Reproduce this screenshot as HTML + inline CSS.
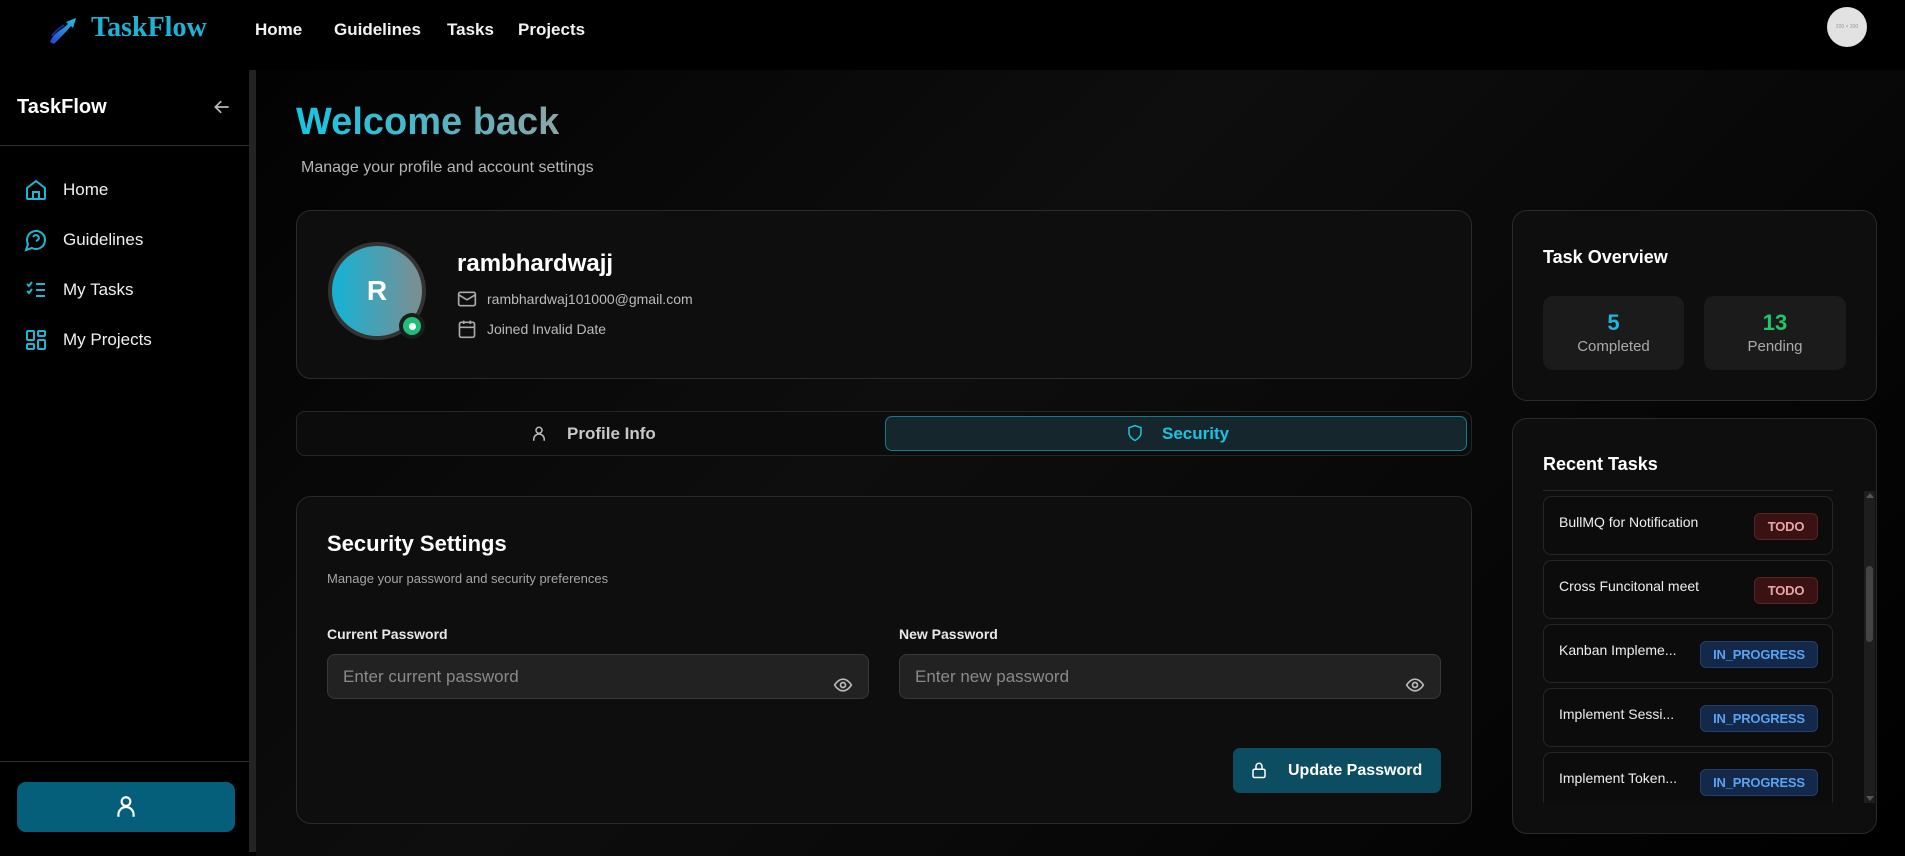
<!DOCTYPE html>
<html><head><meta charset="utf-8">
<style>
*{box-sizing:border-box;margin:0;padding:0}
body{width:1905px;height:856px;overflow:hidden;background:#000;font-family:"Liberation Sans",sans-serif;color:#fff;position:relative}
.abs{position:absolute}
.nav a{position:absolute;top:20px;font-size:17px;font-weight:600;color:#f2f2f2}
.card{position:absolute;background:#0e0e0e;border:1px solid #2a2a2a;border-radius:15px}
.menu{position:absolute;left:24px;font-size:17px;color:#f0f0f0;display:flex;align-items:center}
.menu svg{margin-right:15px}
.item{position:absolute;left:1543px;width:290px;height:59px;border:1px solid #262626;border-radius:8px;background:#0c0c0c}
.item span.t{position:absolute;left:15px;top:17px;font-size:14px;color:#eee}
.badge{position:absolute;right:14px;top:16px;height:27px;border-radius:6px;font-size:13px;font-weight:700;line-height:25px;text-align:center;letter-spacing:-0.2px}
.todo{width:64px;background:#3a1214;border:1px solid #5a2224;color:#e9a4a4}
.ip{width:118px;background:#14284a;border:1px solid #223e6a;color:#5aa2f0}
.inp{position:absolute;top:654px;width:542px;height:45px;background:#222;border:1px solid #383838;border-radius:8px;font-size:17px;color:#8a8a8a;padding:12px 15px}
</style></head><body>
<div class="abs" style="left:256px;top:70px;width:1649px;height:786px;background:linear-gradient(135deg,#020202 0%,#0e0e0e 40%,#070707 70%,#000 100%)"></div>

<svg class="abs" style="left:48px;top:16px" width="32" height="30" viewBox="0 0 32 30">
<defs><linearGradient id="lg" x1="0" y1="1" x2="1" y2="0"><stop offset="0" stop-color="#2a3fd0"/><stop offset="1" stop-color="#1ec8e0"/></linearGradient></defs>
<path d="M2 26 C6 16 14 14 20 8 L18 6 L28 2 L25 12 L23 10 C18 16 12 22 6 28 Z" fill="url(#lg)"/>
<path d="M4 20 C8 14 12 12 16 9" stroke="#1a2a90" stroke-width="2" fill="none"/>
</svg>
<div class="abs" style="left:91px;top:12px;font-family:'Liberation Serif',serif;font-weight:700;font-size:28px;color:#1cb4d6">TaskFlow</div>
<div class="nav">
<a style="left:255px">Home</a><a style="left:334px">Guidelines</a><a style="left:447px">Tasks</a><a style="left:518px">Projects</a>
</div>
<div class="abs" style="left:1827px;top:7px;width:40px;height:40px;border-radius:50%;background:#e2e2e2;font-size:5px;color:#999;text-align:center;line-height:40px">200 × 200</div>

<div class="abs" style="left:249px;top:70px;width:7px;height:782px;background:#232323"></div>
<div class="abs" style="left:17px;top:96px;font-size:20px;font-weight:700">TaskFlow</div>
<svg class="abs" style="left:212px;top:97px" width="20" height="20" viewBox="0 0 24 24" fill="none" stroke="#bbb" stroke-width="2"><path d="M20 12H5M11 5l-7 7 7 7"/></svg>
<div class="abs" style="left:0;top:145px;width:249px;height:1px;background:#2e2e2e"></div>
<div class="menu" style="top:178px"><svg width="24" height="24" viewBox="0 0 24 24" fill="none" stroke="#1fb6d4" stroke-width="2"><path d="M3 10l9-7 9 7v10a1 1 0 01-1 1H4a1 1 0 01-1-1z"/><path d="M9 21v-7h6v7"/></svg>Home</div>
<div class="menu" style="top:228px"><svg width="24" height="24" viewBox="0 0 24 24" fill="none" stroke="#1fb6d4" stroke-width="2"><path d="M7.9 20A9 9 0 1 0 4 16.1L2 22z"/><path d="M9.1 9a3 3 0 0 1 5.8 1c0 2-3 3-3 3"/><path d="M12 17h.01"/></svg>Guidelines</div>
<div class="menu" style="top:278px"><svg width="24" height="24" viewBox="0 0 24 24" fill="none" stroke="#1fb6d4" stroke-width="2"><path d="M3 6l2 2 3-4M3 13l2 2 3-4M12 6h9M12 12h9M12 18h9M4 19h.01"/></svg>My Tasks</div>
<div class="menu" style="top:328px"><svg width="24" height="24" viewBox="0 0 24 24" fill="none" stroke="#1fb6d4" stroke-width="2"><rect x="3" y="3" width="7" height="9" rx="1"/><rect x="14" y="3" width="7" height="5" rx="1"/><rect x="14" y="12" width="7" height="9" rx="1"/><rect x="3" y="16" width="7" height="5" rx="1"/></svg>My Projects</div>
<div class="abs" style="left:0;top:761px;width:249px;height:1px;background:#2e2e2e"></div>
<div class="abs" style="left:17px;top:782px;width:218px;height:50px;background:#065f7a;border-radius:9px"></div>
<svg class="abs" style="left:113px;top:794px" width="26" height="26" viewBox="0 0 24 24" fill="none" stroke="#fff" stroke-width="2"><circle cx="12" cy="7" r="4"/><path d="M5 21v-2a7 7 0 0 1 14 0v2"/></svg>

<div class="abs" style="left:296px;top:101px;font-size:38px;font-weight:700;background:linear-gradient(90deg,#14c6e4,#8aa5a8);-webkit-background-clip:text;color:transparent">Welcome back</div>
<div class="abs" style="left:301px;top:159px;font-size:16px;color:#b5b5b5">Manage your profile and account settings</div>

<div class="card" style="left:296px;top:210px;width:1176px;height:169px"></div>
<div class="abs" style="left:328px;top:242px;width:98px;height:98px;border-radius:50%;border:4px solid #333;background:linear-gradient(90deg,#13b3d6,#7e8d90);font-size:28px;font-weight:700;text-align:center;line-height:90px">R</div>
<div class="abs" style="left:399px;top:313px;width:26px;height:26px;border-radius:50%;background:#1c1c1c"></div>
<div class="abs" style="left:403px;top:317px;width:18px;height:18px;border-radius:50%;background:#1fbf7a"></div>
<div class="abs" style="left:409px;top:323px;width:7px;height:7px;border-radius:50%;background:#fff"></div>
<div class="abs" style="left:457px;top:250px;font-size:24px;font-weight:700">rambhardwajj</div>
<svg class="abs" style="left:457px;top:289px" width="20" height="20" viewBox="0 0 24 24" fill="none" stroke="#aaa" stroke-width="2"><rect x="2" y="4" width="20" height="16" rx="2"/><path d="M2 7l10 6 10-6"/></svg>
<div class="abs" style="left:487px;top:291px;font-size:14px;color:#bbb">rambhardwaj101000@gmail.com</div>
<svg class="abs" style="left:457px;top:319px" width="20" height="20" viewBox="0 0 24 24" fill="none" stroke="#aaa" stroke-width="2"><rect x="3" y="4" width="18" height="18" rx="2"/><path d="M16 2v4M8 2v4M3 10h18"/></svg>
<div class="abs" style="left:487px;top:321px;font-size:14px;color:#bbb">Joined Invalid Date</div>

<div class="abs" style="left:296px;top:411px;width:1176px;height:45px;background:#0c0c0c;border:1px solid #262626;border-radius:9px"></div>
<div class="abs" style="left:885px;top:416px;width:582px;height:35px;background:#15272c;border:1px solid #157a8e;border-radius:7px"></div>
<svg class="abs" style="left:530px;top:424px" width="18" height="20" viewBox="0 0 24 24" fill="none" stroke="#bbb" stroke-width="2"><circle cx="12" cy="7" r="4"/><path d="M5 21v-2a7 7 0 0 1 14 0v2"/></svg>
<div class="abs" style="left:567px;top:424px;font-size:17px;font-weight:600;color:#c8c8c8">Profile Info</div>
<svg class="abs" style="left:1126px;top:423px" width="18" height="20" viewBox="0 0 24 24" fill="none" stroke="#1cc3e0" stroke-width="2"><path d="M12 22s8-4 8-10V5l-8-3-8 3v7c0 6 8 10 8 10z"/></svg>
<div class="abs" style="left:1162px;top:424px;font-size:17px;font-weight:600;color:#1cc3e0">Security</div>

<div class="card" style="left:296px;top:496px;width:1176px;height:328px"></div>
<div class="abs" style="left:327px;top:531px;font-size:22px;font-weight:700">Security Settings</div>
<div class="abs" style="left:327px;top:571px;font-size:13px;color:#a5a5a5">Manage your password and security preferences</div>
<div class="abs" style="left:327px;top:626px;font-size:14px;font-weight:700;color:#e8e8e8">Current Password</div>
<div class="abs" style="left:899px;top:626px;font-size:14px;font-weight:700;color:#e8e8e8">New Password</div>
<div class="inp" style="left:327px">Enter current password</div>
<div class="inp" style="left:899px">Enter new password</div>
<svg class="abs" style="left:833px;top:675px" width="20" height="20" viewBox="0 0 24 24" fill="none" stroke="#bbb" stroke-width="2"><path d="M2 12s4-7 10-7 10 7 10 7-4 7-10 7S2 12 2 12z"/><circle cx="12" cy="12" r="3"/></svg>
<svg class="abs" style="left:1405px;top:675px" width="20" height="20" viewBox="0 0 24 24" fill="none" stroke="#bbb" stroke-width="2"><path d="M2 12s4-7 10-7 10 7 10 7-4 7-10 7S2 12 2 12z"/><circle cx="12" cy="12" r="3"/></svg>
<div class="abs" style="left:1233px;top:748px;width:208px;height:45px;background:#0d4d62;border-radius:7px"></div>
<svg class="abs" style="left:1250px;top:760px" width="18" height="20" viewBox="0 0 24 24" fill="none" stroke="#fff" stroke-width="2"><rect x="4" y="11" width="16" height="11" rx="2"/><path d="M8 11V7a4 4 0 0 1 8 0v4"/></svg>
<div class="abs" style="left:1288px;top:762px;font-size:16px;font-weight:700">Update Password</div>

<div class="card" style="left:1512px;top:210px;width:365px;height:191px"></div>
<div class="abs" style="left:1543px;top:247px;font-size:18px;font-weight:700">Task Overview</div>
<div class="abs" style="left:1543px;top:296px;width:141px;height:74px;background:#1b1b1b;border-radius:10px;text-align:center">
<div style="font-size:22px;font-weight:700;color:#1cb8dc;margin-top:14px">5</div><div style="font-size:15px;color:#aaa;margin-top:2px">Completed</div></div>
<div class="abs" style="left:1704px;top:296px;width:142px;height:74px;background:#1b1b1b;border-radius:10px;text-align:center">
<div style="font-size:22px;font-weight:700;color:#1fc66a;margin-top:14px">13</div><div style="font-size:15px;color:#aaa;margin-top:2px">Pending</div></div>

<div class="card" style="left:1512px;top:418px;width:365px;height:416px"></div>
<div class="abs" style="left:1543px;top:454px;font-size:18px;font-weight:700">Recent Tasks</div>
<div class="abs" style="left:1543px;top:490px;width:290px;height:1px;background:#262626"></div>
<div style="position:absolute;left:0;top:491px;width:1905px;height:312px;overflow:hidden">
<div class="item" style="top:5px"><span class="t">BullMQ for Notification</span><span class="badge todo">TODO</span></div>
<div class="item" style="top:69px"><span class="t">Cross Funcitonal meet</span><span class="badge todo">TODO</span></div>
<div class="item" style="top:133px"><span class="t">Kanban Impleme...</span><span class="badge ip">IN_PROGRESS</span></div>
<div class="item" style="top:197px"><span class="t">Implement Sessi...</span><span class="badge ip">IN_PROGRESS</span></div>
<div class="item" style="top:261px"><span class="t">Implement Token...</span><span class="badge ip">IN_PROGRESS</span></div>
</div>
<div class="abs" style="left:1864px;top:491px;width:11px;height:312px;background:#1e1e1e"></div>
<div class="abs" style="left:1866px;top:566px;width:7px;height:76px;background:#444;border-radius:4px"></div>
<div class="abs" style="left:1866px;top:493px;width:0;height:0;border-left:4px solid transparent;border-right:4px solid transparent;border-bottom:5px solid #555"></div>
<div class="abs" style="left:1866px;top:796px;width:0;height:0;border-left:4px solid transparent;border-right:4px solid transparent;border-top:5px solid #555"></div>
</body></html>
